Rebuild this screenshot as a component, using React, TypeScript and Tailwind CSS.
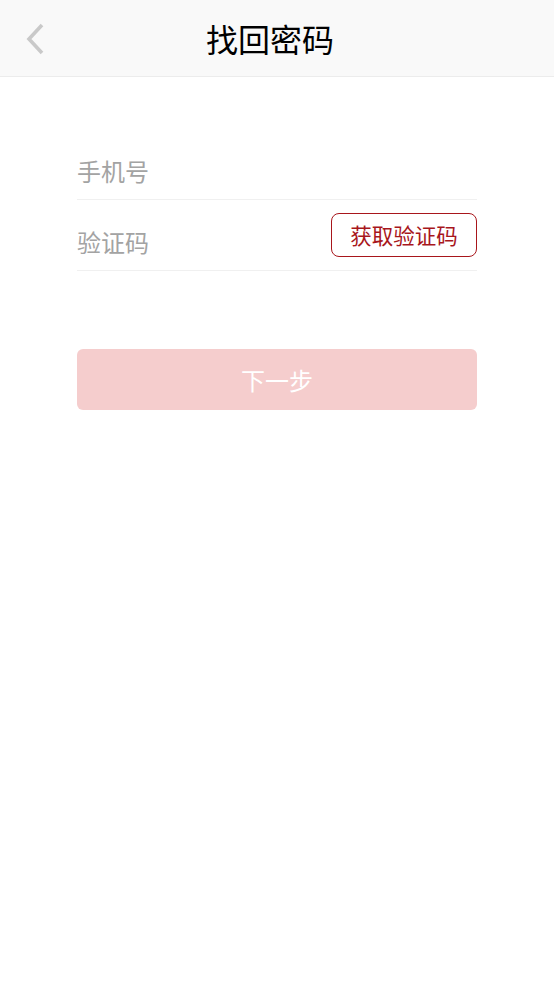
export default function App() {
  return (
    <div
      className="min-h-[984px] bg-white"
      style={{ fontFamily: '"Noto Sans CJK SC", "Noto Sans", sans-serif' }}
    >
      <header className="relative flex h-[77px] items-center justify-center border-b border-[#ececec] bg-[#f9f9f9]">
        <button className="absolute left-[22px] top-[22px] flex h-[34px] w-[26px] items-center justify-center">
          <svg width="22" height="32" viewBox="0 0 22 32" fill="none">
            <path d="M18 2 L5 16 L18 30" stroke="#c9c9c9" strokeWidth="3.6" />
          </svg>
        </button>
        <h1 className="-ml-[14px] text-[32px] leading-none text-black">找回密码</h1>
      </header>

      <div className="mx-[77px] mt-[52px]">
        <div className="flex h-[71px] items-center border-b border-[#f0f0f0]">
          <input
            className="w-full bg-transparent pt-[14px] text-[24px] text-[#333] outline-none placeholder:text-[#a3a3a3]"
            placeholder="手机号"
          />
        </div>
        <div className="flex h-[71px] items-center gap-3 border-b border-[#f0f0f0]">
          <input
            className="min-w-0 flex-1 bg-transparent pt-[14px] text-[24px] text-[#333] outline-none placeholder:text-[#a3a3a3]"
            placeholder="验证码"
          />
          <button className="flex h-[44px] w-[146px] items-center justify-center rounded-[8px] border border-[#a8161c] text-[21.5px] text-[#a8161c]">
            获取验证码
          </button>
        </div>

        <button className="mt-[78px] flex h-[61px] w-full items-center justify-center rounded-[6px] bg-[#f5cdcd] text-[24px] text-white">
          下一步
        </button>
      </div>
    </div>
  );
}
